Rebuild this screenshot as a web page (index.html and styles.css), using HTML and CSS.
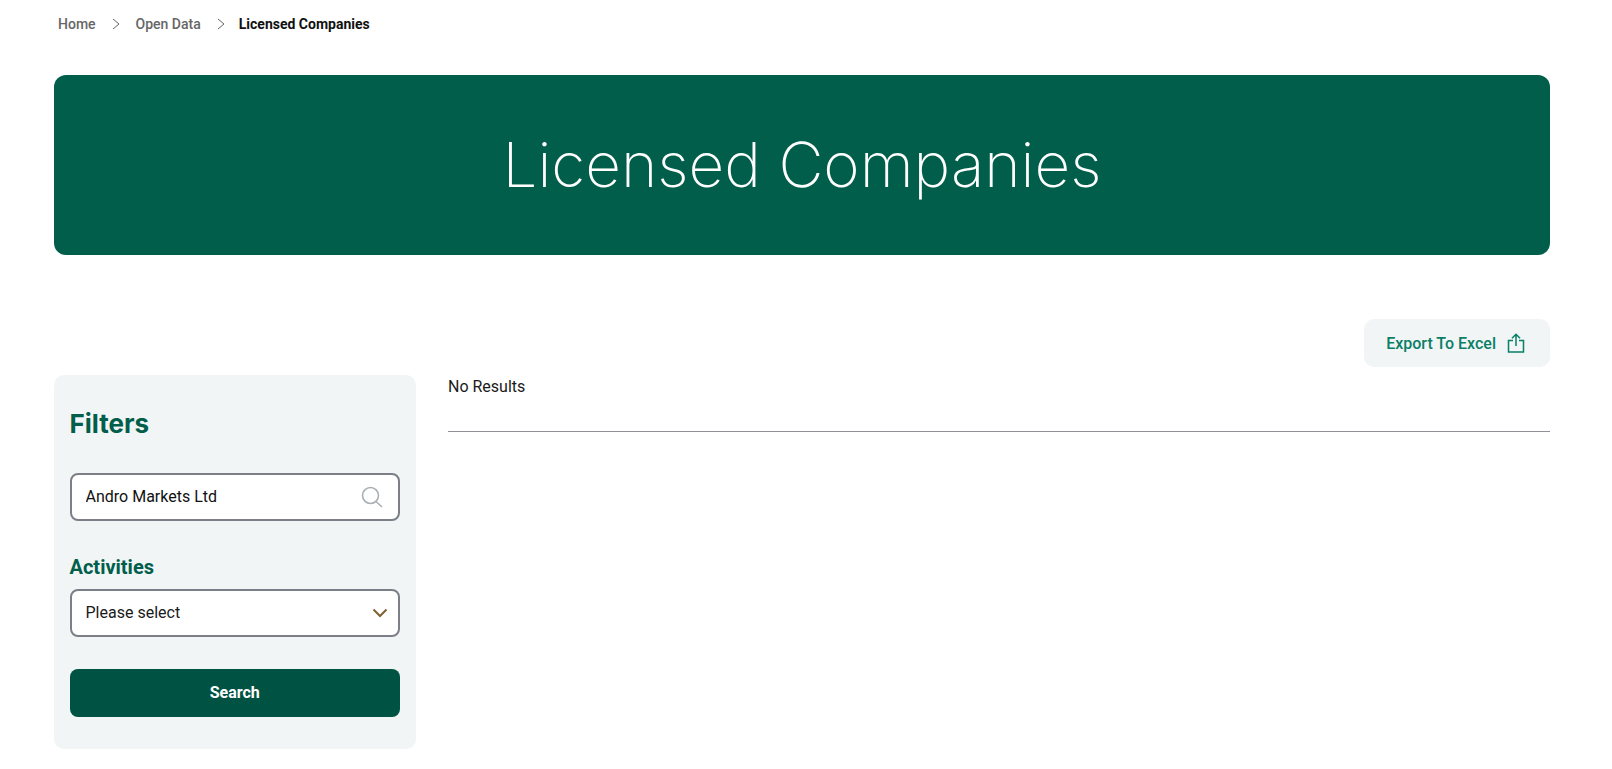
FILE: index.html
```html
<!DOCTYPE html>
<html lang="en">
<head>
    <meta charset="UTF-8">
    <meta name="viewport" content="width=device-width, initial-scale=1.0">
    <title>Licensed Companies</title>
    <link rel="stylesheet" href="styles.css">
</head>
<body>
    <nav class="breadcrumb">
        <a href="#">Home</a>
        <svg class="crumb-sep" width="10" height="12" viewBox="0 0 10 12"><path d="M2 1l6 5-6 5" fill="none" stroke="currentColor" stroke-width="1"/></svg>
        <a href="#">Open Data</a>
        <svg class="crumb-sep" width="10" height="12" viewBox="0 0 10 12"><path d="M2 1l6 5-6 5" fill="none" stroke="currentColor" stroke-width="1"/></svg>
        <span class="crumb-current">Licensed Companies</span>
    </nav>

    <header class="banner">
        <h1>Licensed Companies</h1>
    </header>

    <div class="toolbar">
        <button type="button" class="export-btn">
            Export To Excel
            <svg width="18" height="20" viewBox="0 0 18 20" fill="none" stroke="currentColor" stroke-width="1.5"><path d="M9 13V1.500M5 5.200L9 1.200l4 4"/><path d="M6 7.500H1.500V19H16.500V7.500H12"/></svg>
        </button>
    </div>

    <main class="content">
        <aside class="filters">
            <h2>Filters</h2>
            <div class="field search-field">
                <input type="text" value="Andro Markets Ltd">
                <svg class="search-icon" width="22" height="22" viewBox="0 0 22 22" fill="none" stroke="#a9afb3" stroke-width="1.6"><circle cx="9.500" cy="9.500" r="8"/><path d="M15 15.500l6 5.500"/></svg>
            </div>
            <label class="field-label" for="activities">Activities</label>
            <div class="field select-field" id="activities">
                <span>Please select</span>
                <svg width="16" height="10" viewBox="0 0 16 10" fill="none" stroke="#7d6333" stroke-width="2"><path d="M1.500 1.500L8 8l6.500-6.500"/></svg>
            </div>
            <button type="button" class="search-btn">Search</button>
        </aside>
        <section class="results">
            <p>No Results</p>
            <hr>
        </section>
    </main>
</body>
</html>
```

FILE: styles.css
```css
:root {
    --green: #005e4a;
    --green-dark: #005342;
    --panel: #f1f5f6;
    --text: #1a1a1a;
    --border: #7c7f87;
}

* {
    box-sizing: border-box;
    margin: 0;
    padding: 0;
}

body {
    font-family: 'Roboto', Arial, sans-serif;
    background-color: #fff;
    color: var(--text);
    padding: 0 62px 20px 54px;
}

.breadcrumb {
    display: flex;
    align-items: center;
    height: 48px;
    padding-left: 4px;
    font-size: 14px;
    font-weight: 500;
}

.breadcrumb a {
    color: #666;
    text-decoration: none;
}

.crumb-sep {
    color: #666;
    margin: 0 15px;
}

.crumb-sep:last-of-type {
    margin-right: 13px;
}

.crumb-current {
    color: #111;
    font-weight: 700;
}

.banner {
    margin-top: 27px;
    height: 180px;
    padding-bottom: 2px;
    background-color: var(--green);
    border-radius: 12px;
    display: flex;
    align-items: center;
    justify-content: center;
}

.banner h1 {
    font-family: 'Inter', sans-serif;
    font-size: 62px;
    font-weight: 200;
    color: #fff;
}

.toolbar {
    display: flex;
    justify-content: flex-end;
    margin-top: 64px;
}

.export-btn {
    display: flex;
    align-items: center;
    gap: 11px;
    height: 48px;
    padding: 0 25px 0 22px;
    border: none;
    border-radius: 10px;
    background-color: var(--panel);
    color: #0a7f66;
    font-family: inherit;
    font-size: 16px;
    font-weight: 500;
}

.content {
    display: flex;
    gap: 32px;
    margin-top: 8px;
}

.filters {
    width: 362px;
    height: 374px;
    flex-shrink: 0;
    padding: 34px 16px 0 15.500px;
    background-color: var(--panel);
    border-radius: 10px;
}

.filters h2 {
    font-family: 'Inter', sans-serif;
    font-size: 26px;
    font-weight: 700;
    line-height: 29px;
    color: var(--green);
    margin-bottom: 35px;
}

.field {
    display: flex;
    align-items: center;
    justify-content: space-between;
    height: 48px;
    padding: 0 15px 0 14px;
    background-color: #fff;
    border: 2px solid var(--border);
    border-radius: 8px;
    font-size: 16px;
}

.select-field {
    padding-right: 10px;
}

.field input,
.field span {
    margin-bottom: 2px;
}

.field input {
    flex: 1;
    min-width: 0;
    border: none;
    outline: none;
    background: transparent;
    font: inherit;
    color: #111;
}

.field-label {
    display: block;
    margin-top: 33px;
    margin-bottom: 9px;
    font-size: 20px;
    font-weight: 700;
    line-height: 26px;
    color: var(--green);
}

.search-btn {
    display: block;
    width: 100%;
    height: 48px;
    margin-top: 32px;
    padding-bottom: 2px;
    border: none;
    border-radius: 8px;
    background-color: var(--green-dark);
    color: #fff;
    font-family: inherit;
    font-size: 16px;
    font-weight: 700;
}

.results {
    flex: 1;
}

.results p {
    font-size: 16px;
    line-height: 24px;
}

.results hr {
    margin-top: 32px;
    border: none;
    border-top: 1px solid #8f9398;
}
```
